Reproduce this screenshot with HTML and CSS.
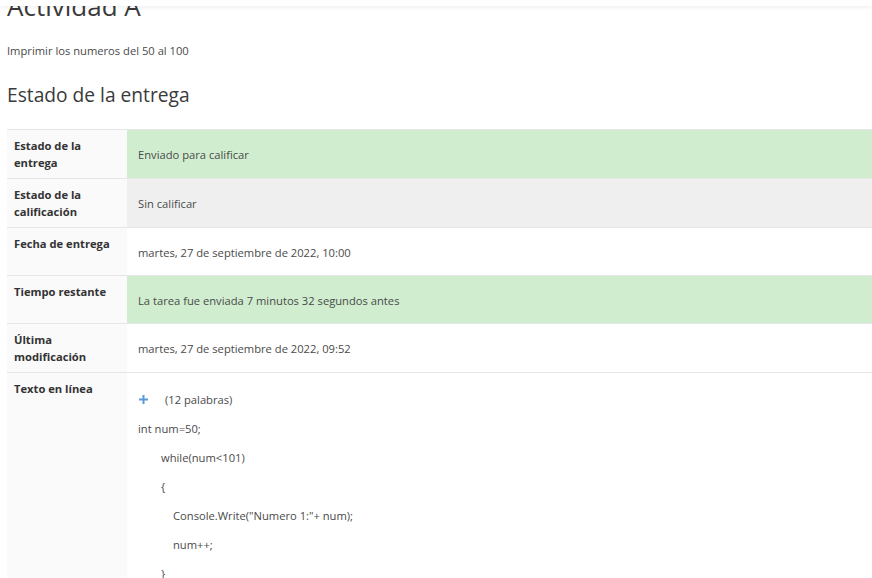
FILE: index.html
```html
<!DOCTYPE html>
<html lang="es">
<head>
<meta charset="utf-8">
<link rel="stylesheet" href="styles.css">
</head>
<body>
<div class="topbar"></div>
<main class="page">
  <h2 class="title">Actividad A</h2>
  <p class="intro">Imprimir los numeros del 50 al 100</p>
  <h3 class="section">Estado de la entrega</h3>
  <table class="status">
    <tr class="ok">
      <th>Estado de la entrega</th>
      <td>Enviado para calificar</td>
    </tr>
    <tr class="grey">
      <th>Estado de la calificación</th>
      <td>Sin calificar</td>
    </tr>
    <tr>
      <th>Fecha de entrega</th>
      <td>martes, 27 de septiembre de 2022, 10:00</td>
    </tr>
    <tr class="ok">
      <th>Tiempo restante</th>
      <td>La tarea fue enviada 7 minutos 32 segundos antes</td>
    </tr>
    <tr>
      <th>Última modificación</th>
      <td>martes, 27 de septiembre de 2022, 09:52</td>
    </tr>
    <tr>
      <th>Texto en línea</th>
      <td>
        <div class="words"><svg class="plus" width="9" height="9" viewBox="0 0 9 9"><path d="M3.5 0h2v3.5H9v2H5.5V9h-2V5.5H0v-2h3.5z" fill="#5a9ad8"/></svg><span>(12 palabras)</span></div>
        <p class="code">int num=50;</p>
        <p class="code i1">while(num&lt;101)</p>
        <p class="code i1">{</p>
        <p class="code i2">Console.Write("Numero 1:"+ num);</p>
        <p class="code i2">num++;</p>
        <p class="code i1">}</p>
      </td>
    </tr>
  </table>
</main>
</body>
</html>
```
FILE: styles.css
```css
html, body {
  margin: 0;
  padding: 0;
  background: #fff;
}
body {
  font-family: "Open Sans", "Liberation Sans", sans-serif;
  color: #4a4a4a;
  font-size: 11.2px;
  overflow: hidden;
}
.topbar {
  position: fixed;
  top: 0;
  left: 0;
  right: 0;
  height: 6px;
  background: #fff;
  box-shadow: 0 1px 4px rgba(0,0,0,0.08);
  z-index: 10;
}
.page {
  padding: 0 0 0 7px;
  margin-top: -12px;
}
.title {
  font-size: 26px;
  font-weight: 400;
  color: #3a3a3a;
  margin: 0;
  line-height: 36px;
}
.intro {
  margin: 19px 0 0;
  font-size: 11.2px;
  line-height: 16px;
  color: #4a4a4a;
}
.section {
  font-size: 19.2px;
  font-weight: 400;
  color: #3a3a3a;
  margin: 22px 0 0;
  line-height: 28px;
}
.status {
  margin-top: 20px;
  width: 100%;
  border-collapse: collapse;
  font-size: 11.2px;
}
.status tr {
  border-top: 1px solid #e6e6e6;
}
.status th {
  width: 106px;
  text-align: left;
  vertical-align: top;
  font-weight: 700;
  color: #333;
  background: #fafafa;
  padding: 7px 7px 7px 7px;
  line-height: 17px;
}
.status td {
  vertical-align: top;
  padding: 16px 11px 14px 11px;
  line-height: 17px;
}
.status tr.ok td {
  background: #d0eecf;
}
.status tr.grey td {
  background: #efefef;
}
.words {
  display: flex;
  align-items: center;
  gap: 17px;
  padding-left: 1px;
  margin-top: 2px;
}
.plus {
  display: block;
}
.code {
  margin: 12px 0 0;
  line-height: 17px;
}
.i1 { padding-left: 23px; }
.i2 { padding-left: 35px; }
```
